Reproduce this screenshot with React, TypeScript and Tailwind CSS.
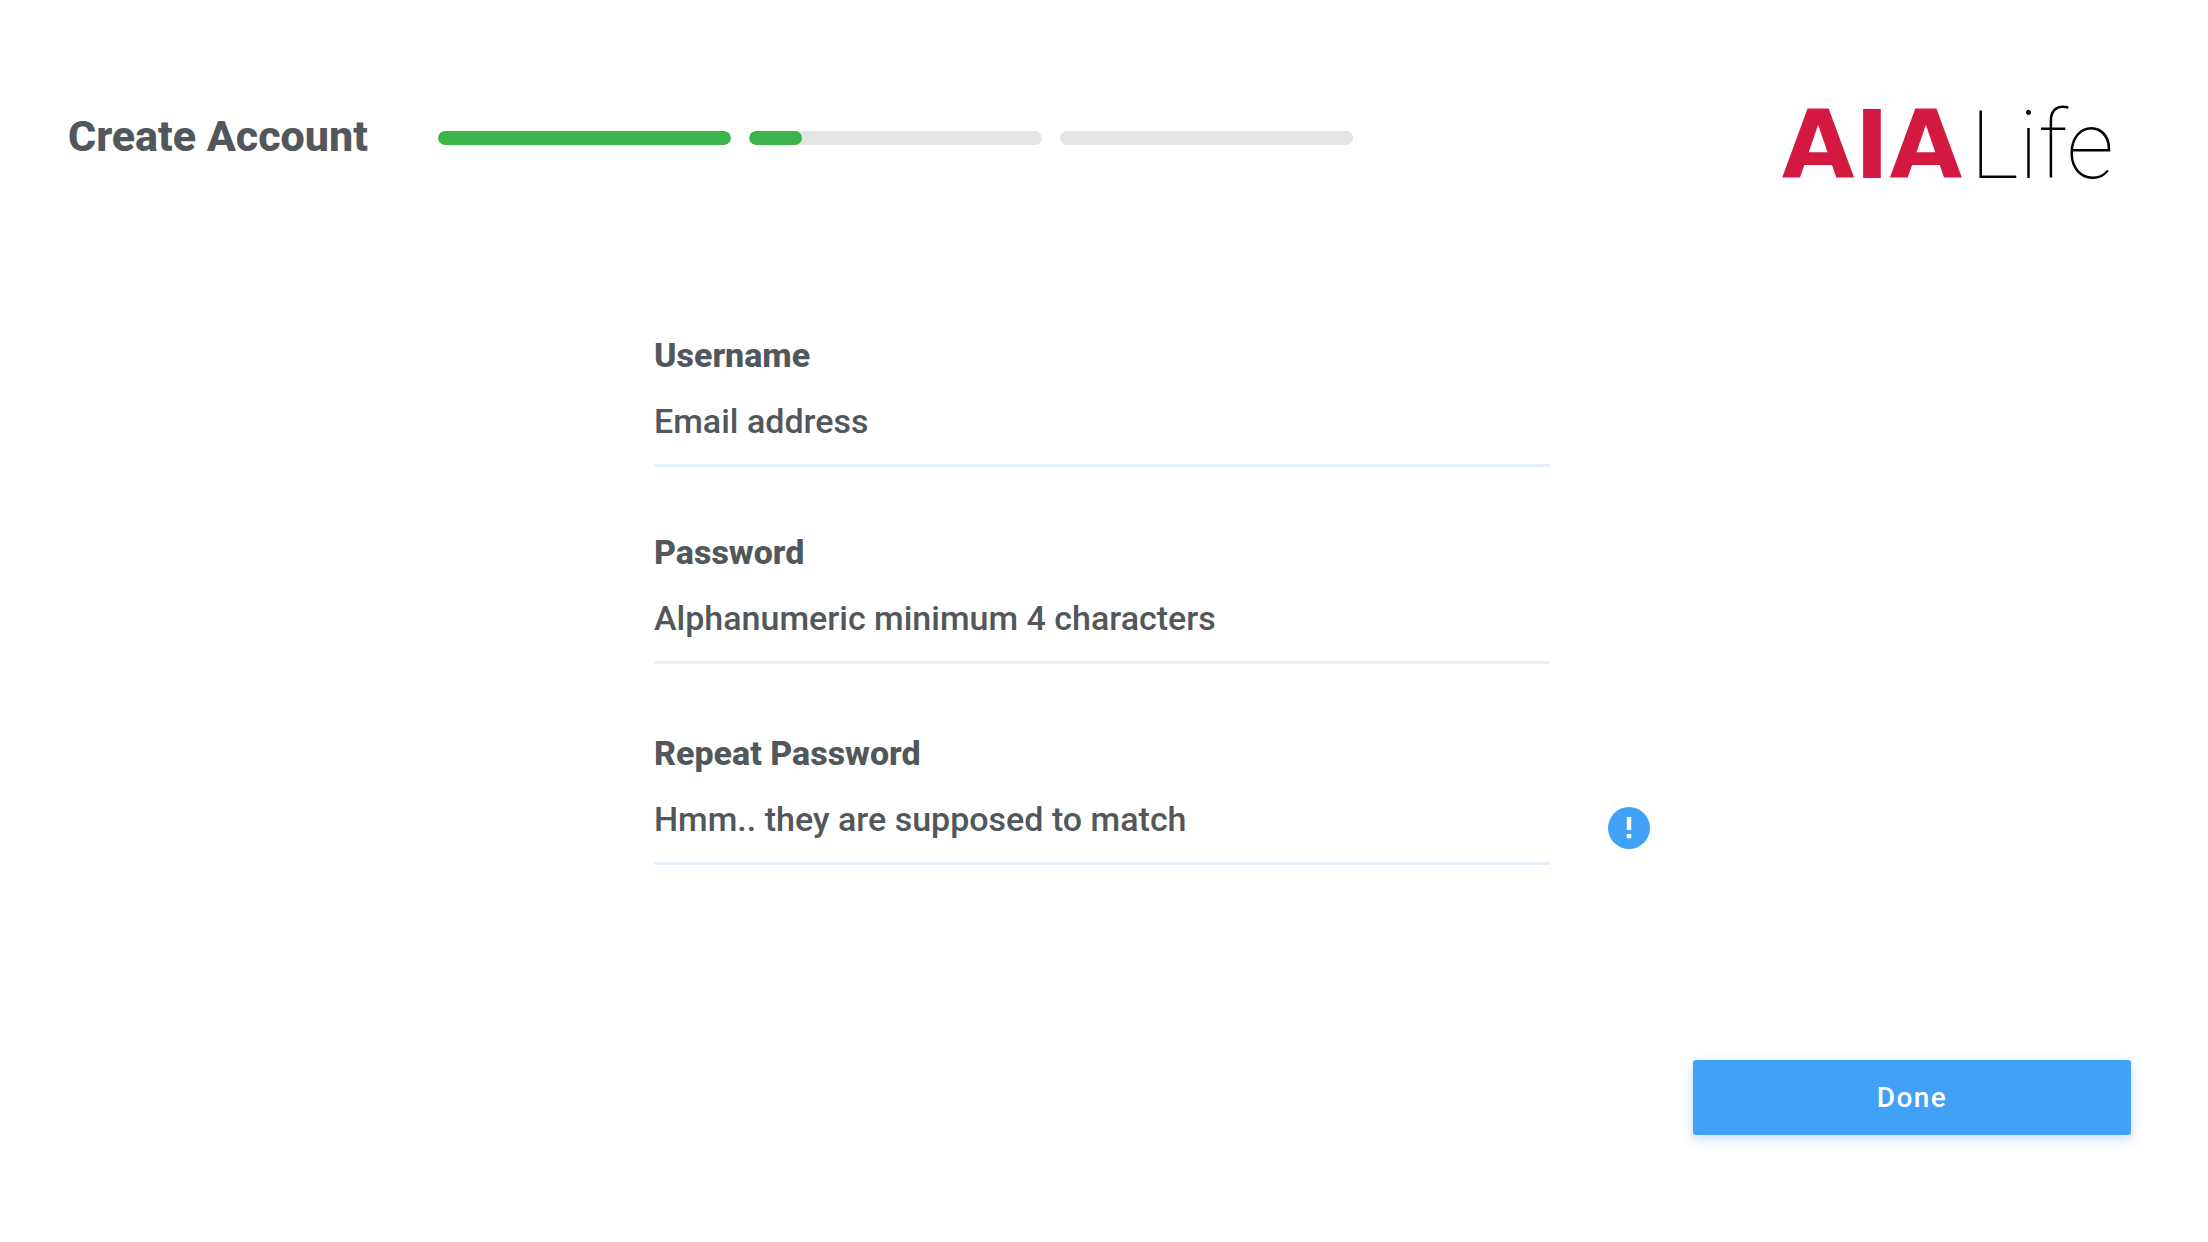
type Step = { label: string; progress: number };

const steps: Step[] = [
  { label: "Step 1", progress: 100 },
  { label: "Step 2", progress: 18 },
  { label: "Step 3", progress: 0 },
];

function Progress() {
  return (
    <div className="flex max-w-[915px] flex-1 gap-[18px]">
      {steps.map((step) => (
        <div
          key={step.label}
          role="progressbar"
          aria-label={step.label}
          aria-valuenow={step.progress}
          className="h-[14px] flex-1 overflow-hidden rounded-full bg-[#e5e5e5]"
        >
          <div className="h-full rounded-full bg-[#3bb54a]" style={{ width: `${step.progress}%` }} />
        </div>
      ))}
    </div>
  );
}

function Logo() {
  return (
    <div className="flex items-baseline gap-2 whitespace-nowrap text-[94px] leading-[100px]">
      <span className="font-['DejaVu_Sans',sans-serif] font-bold text-[#d3193f]">AIA</span>
      <span className="font-thin text-black">Life</span>
    </div>
  );
}

function AlertIcon() {
  return (
    <svg viewBox="0 0 42 42" className="size-[42px]" role="img" aria-label="Passwords do not match">
      <circle cx="21" cy="21" r="21" fill="#40a1f7" />
      <path d="M18.8 10h4.4v13h-4.4zM18.8 27h4.4v4.2h-4.4z" fill="#fff" />
    </svg>
  );
}

type FieldProps = { id: string; label: string; type: string; placeholder: string; alert?: boolean };

function Field({ id, label, type, placeholder, alert }: FieldProps) {
  return (
    <div className="grid grid-cols-[1fr_minmax(0,896px)_1fr] pr-1">
      <div className="col-start-2 flex flex-col">
        <label htmlFor={id} className="text-[34px] font-extrabold leading-10">
          {label}
        </label>
        <input
          id={id}
          type={type}
          placeholder={placeholder}
          className="mt-2 h-[84px] w-full border-b-[3px] border-[#e4f0fc] bg-transparent pb-1.5 text-[34px] font-medium leading-10 outline-none placeholder:text-[#51575b] placeholder:opacity-100"
        />
      </div>
      {alert && (
        <div className="mb-4 ml-[58px] self-end">
          <AlertIcon />
        </div>
      )}
    </div>
  );
}

export default function App() {
  return (
    <main className="flex min-h-screen flex-col bg-white font-['Roboto',sans-serif] text-[#51575b]">
      <header className="flex items-start justify-between gap-16 pl-[68px] pr-[94px] pt-24">
        <div className="flex h-[84px] flex-1 items-center gap-[70px]">
          <h1 className="whitespace-nowrap pb-1 text-[43px] font-extrabold leading-[50px]">Create Account</h1>
          <Progress />
        </div>
        <Logo />
      </header>
      <form className="flex flex-1 flex-col pt-[139px]">
        <div className="flex flex-col gap-[65px]">
          <Field id="username" label="Username" type="text" placeholder="Email address" />
          <Field id="password" label="Password" type="password" placeholder="Alphanumeric minimum 4 characters" />
          <div className="pt-1">
            <Field id="repeat" label="Repeat Password" type="password" placeholder="Hmm.. they are supposed to match" alert />
          </div>
        </div>
        <div className="mt-auto flex justify-end pb-[107px] pr-[77px]">
          <button
            type="button"
            className="h-[75px] w-[438px] rounded-[3px] bg-[#40a1f7] text-[28px] font-medium tracking-wider text-white shadow-[0_4px_12px_rgba(64,140,220,0.3)]"
          >
            Done
          </button>
        </div>
      </form>
    </main>
  );
}
